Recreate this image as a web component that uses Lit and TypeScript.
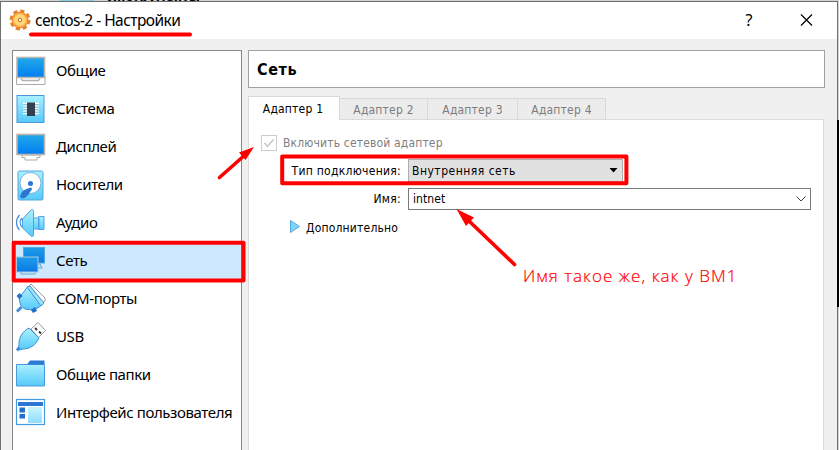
import { LitElement, html, css, svg } from "lit";
import { customElement, property } from "lit/decorators.js";

const icons: Record<string, unknown> = {
  general: svg`<path d="M1.500 21h28.500v8.500H1.500z" fill="#fff" stroke="#aaa"/><path d="M6 23.500l1.500 2h16l1.500-2" fill="none" stroke="#b0b0b0" stroke-width="1.300"/><rect x="2" y="2.500" width="27.500" height="20" fill="url(#scr)" stroke="#b8b4b0" stroke-width="1.600"/>`,
  system: svg`<rect x="2" y="2.500" width="27" height="27" fill="url(#sky)" stroke="#4b96dc"/><path d="M8 10.500h16M8 13h16M8 15.500h16M8 18h16M8 20.500h16" stroke="#fff" stroke-width="1.300"/><path d="M8 11.700h16M8 14.200h16M8 16.700h16M8 19.200h16" stroke="#79aeca" stroke-width=".7"/><rect x="12" y="9.500" width="8" height="13.500" fill="#35404e"/>`,
  display: svg`<path d="M7 24h18v2.500h-3V29H10v-2.500H7z" fill="#fff" stroke="#aaa"/><rect x="2" y="3.500" width="27.500" height="20" fill="url(#scr)" stroke="#b8b4b0" stroke-width="1.600"/>`,
  storage: svg`<rect x="3" y="2" width="25" height="29" rx="1.500" fill="url(#sky)" stroke="#55a5df"/><circle cx="15.500" cy="14" r="10.500" fill="#fff" stroke="#63a5d5" stroke-width=".8"/><path d="M5 27.500c2-6 4-7 11-9l1.200 1.500c-3 4-5 8.500-8.500 9.200-2 .5-3.200-.4-3.700-1.700z" fill="#2d76cf"/><circle cx="15.500" cy="14.500" r="2.500" fill="#2d76cf"/>`,
  audio: svg`<path d="M4.500 8c-4 4-4 11 0 15M7 11c-2.500 3-2.500 6 0 9" fill="none" stroke="#3f90df" stroke-width="1.200"/><path d="M7.500 12l9-9.500c1.500 0 2 .5 2 2v23c0 1.500-.5 2-2 2l-9-8.500z" fill="url(#sky)" stroke="#51a4e3"/><path d="M18.500 11H24v11h-5.500zM23.500 9.500H29v13h-5.500z" fill="url(#sky)" stroke="#51a4e3"/>`,
  network: svg`<path d="M16 19h9l2 4H17z" fill="#b8e8fc" stroke="#58a0d7"/><rect x="8.500" y="2.500" width="21" height="15.500" fill="url(#net)" stroke="#56a6df"/><path d="M6 26h14v3H6z" fill="#c8f2ff" stroke="#69a4d0"/><rect x="1.500" y="12" width="21.500" height="15" fill="url(#net)" stroke="#a9c7dc"/>`,
  com: svg`<path d="M14 3l2-2 14 14v3l-4 3z" fill="#fff" stroke="#999"/><path d="M4 15L12.500 4l15 16-3 4-6 3-9-1-4-4z" fill="url(#sky)" stroke="#448fcd"/><path d="M12 4l3-1 14 17-3 3z" fill="#99e2fc" stroke="#448fcd"/><path d="M6.500 24l-4.500 4.500" stroke="#3c8edc" stroke-width="3"/><path d="M1.500 13l3-3 3 3-3 3zM16 27l4-3 2 4-4 2z" fill="#226fcb"/>`,
  usb: svg`<path d="M16 8l7-6.500 7.500 8-7 7z" fill="#fff" stroke="#999"/><path d="M20 7l2 2M24 10.500l2 2" stroke="#333" stroke-width="1.800"/><path d="M14 7l10 10c-3 7-9 11-16 11l-3 1-2-2 1-3c-.500-8 4-14 10-17z" fill="url(#sky)" stroke="#468fcf"/><path d="M4.500 26.500L2 29.500" stroke="#3c8edc" stroke-width="3"/>`,
  folder: svg`<path d="M1.500 5.500h28v21.500h-28z" fill="url(#sky)" stroke="#4a9bdd"/><path d="M12 5.500l3-4h14.500v4z" fill="#2d79d6"/>`,
  ui: svg`<rect x="1.500" y="2.500" width="28" height="25" fill="#fff" stroke="#4599df" stroke-width="1.200"/><rect x="3" y="5" width="25" height="4" fill="#2d76d2"/><rect x="4.500" y="10.500" width="5.500" height="5" fill="#246fcd"/><rect x="4.500" y="17" width="5.500" height="4.500" fill="#246fcd"/><rect x="13" y="10" width="14" height="16" fill="url(#sky)" opacity=".65"/>`,
};

@customElement("vb-icon")
export class VbIcon extends LitElement {
  @property() name = "general";
  static styles = css`
    :host { display: block; width: 32px; height: 32px; flex: none; }
    svg { display: block; }
  `;
  render() {
    return html`<svg width="32" height="32" viewBox="0 0 32 32">
      <defs>
        <linearGradient id="scr" x1="0" y1="0" x2="0" y2="1"><stop stop-color="#24a9e8" /><stop offset="1" stop-color="#007df2" /></linearGradient>
        <linearGradient id="net" x1="0" y1="0" x2="0" y2="1"><stop stop-color="#1f9ee9" /><stop offset="1" stop-color="#0879e6" /></linearGradient>
        <linearGradient id="sky" x1="0" y1="0" x2="0" y2="1"><stop stop-color="#abf1ff" /><stop offset="1" stop-color="#55c9fa" /></linearGradient>
      </defs>
      ${icons[this.name]}
    </svg>`;
  }
}

const sections = [
  ["general", "Общие"],
  ["system", "Система"],
  ["display", "Дисплей"],
  ["storage", "Носители"],
  ["audio", "Аудио"],
  ["network", "Сеть"],
  ["com", "COM-порты"],
  ["usb", "USB"],
  ["folder", "Общие папки"],
  ["ui", "Интерфейс пользователя"],
];

@customElement("app-root")
export class AppRoot extends LitElement {
  static styles = css`
    :host { display: block; position: relative; width: 839px; height: 450px; overflow: hidden; background: #d2d2d2; color: #000; font-family: "DejaVu Sans Condensed", "DejaVu Sans", sans-serif; font-size: 12px; }
    * { box-sizing: border-box; }
    .behind { height: 1px; overflow: hidden; display: flex; align-items: flex-end; padding-left: 60px; }
    .swatch { width: 34px; height: 1px; background: #86cbdc; margin-right: 13px; }
    .behind span { font: bold 12px/8px "DejaVu Sans", sans-serif; }
    .window { width: 838px; height: 449px; background: #f0f0f0; border: 1px solid #707070; border-bottom: 0; display: flex; flex-direction: column; }
    .title { height: 37px; flex: none; background: #fff; display: flex; align-items: center; padding-left: 8px; }
    .gear { flex: none; width: 22px; height: 22px; margin-right: 4px; margin-top: -1px; }
    .caption { flex: 1; font: 15.5px/20px "Noto Sans", sans-serif; letter-spacing: -0.54px; white-space: nowrap; margin-top: -1px; }
    .ctl { flex: none; }
    .body { flex: 1; min-height: 0; display: flex; padding: 11px 12px 0 11px; }
    .side { width: 230px; flex: none; border: 1px solid #828790; border-bottom: 0; background: #fff; }
    .item { height: 38px; display: flex; align-items: center; padding: 1px 0 0 2px; font: 15px/20px "Noto Sans", sans-serif; letter-spacing: -0.4px; white-space: nowrap; gap: 9px; }
    .item span { margin-top: -2px; }
    .item.sel { background: #cde8ff; }
    .main { width: 577px; margin-left: 6px; display: flex; flex-direction: column; }
    .head { height: 38px; flex: none; border: 1px solid #a0a0a0; background: #fff; font: bold 16px/38px "DejaVu Sans Condensed", sans-serif; letter-spacing: 0.6px; padding-left: 8px; }
    .tabs { height: 24px; margin-top: 8px; flex: none; display: flex; align-items: flex-end; position: relative; margin-bottom: -1px; }
    .tab { height: 22px; width: 88px; border: 1px solid #d9d9d9; border-left: 0; background: #ececec; color: #7d7d7d; text-align: center; line-height: 22px; letter-spacing: 0.2px; }
    .tab.wide { width: 90px; }
    .tab.on { height: 24px; width: 92px; border: 1px solid #d9d9d9; border-bottom: 0; background: #fff; color: #000; line-height: 24px; padding-right: 2px; }
    .pane { flex: 1; width: 576px; border: 1px solid #dcdcdc; border-bottom: 0; background: #fff; padding: 14px 12px 0; }
    .check { height: 17px; display: flex; align-items: center; gap: 6px; color: #808080; letter-spacing: 0.16px; }
    .row { display: flex; align-items: center; }
    .lab { width: 140px; text-align: right; margin-right: 7px; letter-spacing: 0.28px; }
    .combo { height: 23px; width: 215px; border: 1px solid #adadad; background: #e1e1e1; display: flex; align-items: center; justify-content: space-between; padding: 0 4px 0 3px; letter-spacing: 0.5px; }
    .edit { height: 22px; width: 403px; background: #fff; border: 1px solid #7a7a7a; display: flex; align-items: center; justify-content: space-between; padding: 0 4px; letter-spacing: 0.1px; }
    .r1 { margin-top: 8px; }
    .r2 { margin-top: 6px; }
    .more { margin: 10px 0 0 29px; height: 16px; display: flex; align-items: center; gap: 6px; letter-spacing: 0.2px; }
    .more svg { margin-top: -3px; }
    .marks { position: absolute; left: 0; top: 0; }
    .note { position: absolute; left: 523px; top: 264px; font: 300 17px/24px "Open Sans", sans-serif; letter-spacing: 1.05px; color: #f00; -webkit-text-stroke: 0.2px #f00; white-space: nowrap; }
  `;
  render() {
    return html`
      <div class="behind"><i class="swatch"></i><span>Инструменты</span></div>
      <div class="window">
        <div class="title">
          <svg class="gear" viewBox="0 0 22 22">
            <circle cx="11" cy="11" r="9" fill="none" stroke="#e2822c" stroke-width="3" stroke-dasharray="4.100 2.969" />
            <circle cx="11" cy="11" r="8" fill="#f9a845" stroke="#e8862c" />
            <circle cx="11" cy="11" r="6" fill="#ffd878" stroke="#fbc060" />
            <circle cx="11" cy="11" r="1.800" fill="#fff" stroke="#cf6a14" />
          </svg>
          <span class="caption">centos-2 - Настройки</span>
          <svg class="ctl" width="110" height="37" viewBox="728 2 110 37"><text x="746.500" y="26" font-family="Noto Sans" font-size="16">?</text><path d="M802 14.500l11 11M813 14.500l-11 11" stroke="#000" stroke-width="1.200" /></svg>
        </div>
        <div class="body">
          <div class="side">
            ${sections.map(([icon, label]) => html`<div class="item ${icon === "network" ? "sel" : ""}"><vb-icon name=${icon}></vb-icon><span>${label}</span></div>`)}
          </div>
          <div class="main">
            <div class="head">Сеть</div>
            <div class="tabs">
              <div class="tab on">Адаптер 1</div>
              <div class="tab">Адаптер 2</div>
              <div class="tab wide">Адаптер 3</div>
              <div class="tab">Адаптер 4</div>
            </div>
            <div class="pane">
              <div class="check"><svg width="16" height="16"><rect x=".5" y=".5" width="15" height="15" fill="#fff" stroke="#ccc" /><path d="M3.500 8l3 3.500 6-7" fill="none" stroke="#c4c4c4" stroke-width="1.400" /></svg><span>Включить сетевой адаптер</span></div>
              <div class="row r1"><span class="lab">Тип подключения:</span><div class="combo"><span>Внутренняя сеть</span><svg width="9" height="5"><path d="M.5 0h8L4.500 4.500z" /></svg></div></div>
              <div class="row r2"><span class="lab">Имя:</span><div class="edit"><span>intnet</span><svg width="10" height="6"><path d="M.5 .5L5 5 9.500 .5" fill="none" stroke="#444" /></svg></div></div>
              <div class="more"><svg width="10" height="13"><path d="M.5 .5L9.500 6.500.5 12.500z" fill="#7dd4fa" stroke="#5aa7e0" /></svg><span>Дополнительно</span></div>
            </div>
          </div>
        </div>
      </div>
      <div class="note">Имя такое же, как у ВМ1</div>
      <svg class="marks" width="839" height="450" fill="none" stroke="#f00" stroke-width="4" stroke-linecap="round" stroke-linejoin="round">
        <rect x="837" y="120" width="2" height="187" fill="#000" stroke="none" />
        <path d="M31 34.500H190" />
        <rect x="13.700" y="242.700" width="229.800" height="37.800" />
        <rect x="282.200" y="156.500" width="344.200" height="26.800" />
        <path d="M219.500 177.500L246 154M514.500 264.500L468 220" stroke-width="3.600" />
        <path d="M254 147L239 152.500 245.500 160zM456.500 209L474 217.500 466 226z" fill="#f00" stroke="none" />
      </svg>
    `;
  }
}
